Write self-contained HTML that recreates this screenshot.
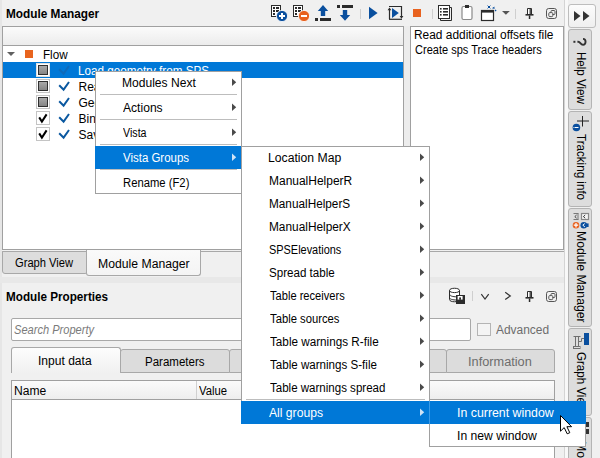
<!DOCTYPE html>
<html><head><meta charset="utf-8">
<style>
*{box-sizing:border-box;margin:0;padding:0}
html,body{width:600px;height:458px;overflow:hidden;background:#f0f0f0}
body{position:relative;font-family:"Liberation Sans",sans-serif;font-size:12px;color:#000}
.a{position:absolute}
.t{position:absolute;white-space:pre;line-height:12px;font-size:12px}
.b{font-weight:bold}
svg{position:absolute;overflow:visible}
</style></head><body>

<!-- left darker strip -->
<div class="a" style="left:0;top:0;width:2px;height:458px;background:#e6e6e6"></div>

<!-- top title -->
<div class="t b" style="left:5.50px;top:8.00px;transform-origin:0 0;transform:scaleX(0.9842)">Module Manager</div>

<!-- tree box -->
<div class="a" style="left:2px;top:26px;width:402px;height:224px;background:#fff;border:1px solid #a0a0a0"></div>
<div class="a" style="left:3px;top:27px;width:400px;height:19px;background:linear-gradient(#fbfbfb,#ececec);border-bottom:1px solid #a0a0a0"></div>

<!-- splitter between tree and text box -->
<div class="a" style="left:404px;top:26px;width:6px;height:224px;background:#ececec"></div>

<!-- text box -->
<div class="a" style="left:410px;top:26px;width:154px;height:224px;background:#fff;border:1px solid #a0a0a0"></div>
<div class="t" style="left:413.91px;top:29.00px;transform-origin:0 0;transform:scaleX(0.9921)">Read additional offsets file</div>
<div class="t" style="left:414.90px;top:44.00px;transform-origin:0 0;transform:scaleX(0.9181)">Create sps Trace headers</div>

<!-- vertical separator line -->
<div class="a" style="left:564px;top:0;width:1px;height:458px;background:#d4d4d4"></div>
<div class="a" style="left:565px;top:0;width:3px;height:458px;background:#f8f8f8"></div>

<!-- tree rows -->
<svg style="left:0;top:0" width="1" height="1"></svg>
<div class="a" style="left:7px;top:52px;width:0;height:0;border-left:4px solid transparent;border-right:4px solid transparent;border-top:4px solid #606060"></div>
<div class="a" style="left:25px;top:50px;width:8px;height:8px;background:#e8641e"></div>
<div class="t" style="left:42.73px;top:49.00px;transform-origin:0 0;transform:scaleX(0.9720)">Flow</div>

<div class="a" style="left:3px;top:62px;width:400px;height:16px;background:#0078d7"></div>
<div class="t" style="left:78px;top:65px;color:#fff;transform-origin:0 0;transform:scaleX(0.9724)">Load geometry from SPS</div>
<div class="a" style="left:36px;top:63px;width:14px;height:14px;border:1px solid #e0e0e0;background:#fff"></div><div class="a" style="left:38px;top:65px;width:10px;height:10px;border:1px solid #303030;background:linear-gradient(#a8a8a8,#858585)"></div><svg style="left:58px;top:65px" width="12" height="10"><path d="M1.2 4.2 L5.6 8.6 L11 1" fill="none" stroke="#1a5fa3" stroke-opacity="0.55" stroke-width="2"/></svg><div class="a" style="left:36px;top:79px;width:14px;height:14px;border:1px solid #c4c4c4;background:#fff"></div><div class="a" style="left:38px;top:81px;width:10px;height:10px;border:1px solid #303030;background:linear-gradient(#a8a8a8,#858585)"></div><svg style="left:58px;top:81px" width="12" height="10"><path d="M1.2 4.2 L5.6 8.6 L11 1" fill="none" stroke="#0a58a0" stroke-opacity="1" stroke-width="2"/></svg><div class="t" style="left:78.5px;top:81px">Read additional offsets file</div><div class="a" style="left:36px;top:95px;width:14px;height:14px;border:1px solid #c4c4c4;background:#fff"></div><div class="a" style="left:38px;top:97px;width:10px;height:10px;border:1px solid #303030;background:linear-gradient(#a8a8a8,#858585)"></div><svg style="left:58px;top:97px" width="12" height="10"><path d="M1.2 4.2 L5.6 8.6 L11 1" fill="none" stroke="#0a58a0" stroke-opacity="1" stroke-width="2"/></svg><div class="t" style="left:78.5px;top:97px">Geometry QC</div><div class="a" style="left:36px;top:111px;width:14px;height:14px;border:1px solid #c4c4c4;background:#fff"></div><svg style="left:36px;top:111px" width="14" height="14"><path d="M3.2 6.4 L5.9 10.6 L10.6 3.4" fill="none" stroke="#000" stroke-width="2"/></svg><svg style="left:58px;top:113px" width="12" height="10"><path d="M1.2 4.2 L5.6 8.6 L11 1" fill="none" stroke="#0a58a0" stroke-opacity="1" stroke-width="2"/></svg><div class="t" style="left:78.5px;top:113px">Binning</div><div class="a" style="left:36px;top:127px;width:14px;height:14px;border:1px solid #c4c4c4;background:#fff"></div><svg style="left:36px;top:127px" width="14" height="14"><path d="M3.2 6.4 L5.9 10.6 L10.6 3.4" fill="none" stroke="#000" stroke-width="2"/></svg><svg style="left:58px;top:129px" width="12" height="10"><path d="M1.2 4.2 L5.6 8.6 L11 1" fill="none" stroke="#0a58a0" stroke-opacity="1" stroke-width="2"/></svg><div class="t" style="left:78.5px;top:129px">Save geometry</div>

<svg style="left:0;top:0" width="600" height="458">
<!-- icon1 table + plus -->
<rect x="271.5" y="5.5" width="9" height="11" fill="#fff" stroke="#2b2b2b" stroke-width="1"/>
<rect x="273" y="7" width="2" height="2" fill="#2b2b2b"/><rect x="276" y="7" width="3" height="2" fill="#2b2b2b"/>
<rect x="273" y="10" width="2" height="2" fill="#2b2b2b"/><rect x="276" y="10" width="3" height="2" fill="#2b2b2b"/>
<rect x="273" y="13" width="2" height="2" fill="#2b2b2b"/>
<circle cx="282" cy="16" r="5.6" fill="#0a4f9e" stroke="#fff" stroke-width="0.8"/>
<rect x="279" y="15" width="6" height="2" fill="#fff"/><rect x="281" y="13" width="2" height="6" fill="#fff"/>
<!-- icon2 table + minus -->
<rect x="293.5" y="5.5" width="9" height="11" fill="#fff" stroke="#2b2b2b" stroke-width="1"/>
<rect x="295" y="7" width="2" height="2" fill="#2b2b2b"/><rect x="298" y="7" width="3" height="2" fill="#2b2b2b"/>
<rect x="295" y="10" width="2" height="2" fill="#2b2b2b"/><rect x="298" y="10" width="3" height="2" fill="#2b2b2b"/>
<rect x="295" y="13" width="2" height="2" fill="#2b2b2b"/>
<circle cx="304" cy="16" r="5.6" fill="#e8621f" stroke="#fff" stroke-width="0.8"/>
<rect x="301" y="15" width="6" height="2" fill="#fff"/>
<!-- upload -->
<path d="M323 5 L328.2 11 H325.2 V16 H320.8 V11 H317.8 Z" fill="#0a4f9e"/>
<rect x="315" y="18" width="3" height="3" fill="#2b2b2b"/><rect x="320" y="18" width="11" height="3" fill="#2b2b2b"/>
<!-- download -->
<rect x="337" y="5" width="3" height="3" fill="#2b2b2b"/><rect x="342" y="5" width="11" height="3" fill="#2b2b2b"/>
<path d="M345 20.8 L350.2 15 H347.2 V10 H342.8 V15 H339.8 Z" fill="#0a4f9e"/>
<!-- sep -->
<rect x="360" y="9" width="1" height="10" fill="#cfcfcf"/>
<!-- play -->
<path d="M369 6.8 L377.6 13 L369 19.2 Z" fill="#0a4f9e"/>
<!-- run step -->
<path d="M389.5 19 V9" stroke="#2b2b2b" stroke-width="1.2" fill="none"/>
<path d="M387.6 10.2 L389.5 7.5 L391.4 10.2 Z" fill="#2b2b2b"/>
<path d="M389 6.5 H401.5 V17" stroke="#2b2b2b" stroke-width="1.2" fill="none"/>
<path d="M399.6 16 L401.5 18.7 L403.4 16 Z" fill="#2b2b2b"/>
<path d="M389 19.3 H402" stroke="#2b2b2b" stroke-width="1.2" fill="none"/>
<path d="M392 8 L398.8 13 L392 18 Z" fill="#0a4f9e"/>
<!-- stop -->
<rect x="413" y="9" width="8" height="8" fill="#e8621f"/>
<!-- sep -->
<rect x="432" y="9" width="1" height="10" fill="#cfcfcf"/>
<!-- docs list -->
<path d="M440.5 18.5 V20.5 H451.5 V7.5 H449.5" fill="none" stroke="#2b2b2b" stroke-width="1"/>
<rect x="438.5" y="5.5" width="11" height="13" fill="#fff" stroke="#2b2b2b" stroke-width="1"/>
<rect x="440" y="8" width="1.6" height="1.6" fill="#2b2b2b"/><rect x="443" y="8" width="5" height="1.6" fill="#2b2b2b"/>
<rect x="440" y="11" width="1.6" height="1.6" fill="#2b2b2b"/><rect x="443" y="11" width="5" height="1.6" fill="#2b2b2b"/>
<rect x="440" y="14" width="1.6" height="1.6" fill="#2b2b2b"/><rect x="443" y="14" width="5" height="1.6" fill="#2b2b2b"/>
<!-- clipboard -->
<rect x="462" y="6.5" width="10" height="13" rx="1.5" fill="#fff" stroke="#8a8a8a" stroke-width="1.2"/>
<rect x="465" y="5" width="4" height="3" fill="#2b2b2b"/>
<!-- window sparkle -->
<rect x="481.5" y="10.5" width="12" height="10" fill="#fff" stroke="#2b2b2b" stroke-width="1.2"/>
<rect x="481" y="10" width="13" height="2.6" fill="#2b2b2b"/>
<path d="M487.6 5.6 L490.4 8.4 M490.4 5.6 L487.6 8.4" stroke="#0a4f9e" stroke-width="1"/>
<rect x="488.4" y="6.4" width="1.4" height="1.4" fill="#0a4f9e"/>
<path d="M492.6 8.6 L494.6 7.2 M493 7.2 L494.3 8.8" stroke="#0a4f9e" stroke-width="1"/>
<path d="M495 10 L496.2 11" stroke="#0a4f9e" stroke-width="1.2"/>
<!-- dropdown -->
<path d="M502 11 H509.8 L505.9 14.8 Z" fill="#555"/>
<!-- sep -->
<rect x="515" y="9" width="1" height="10" fill="#cfcfcf"/>
<g transform="translate(0,0)">
<path d="M527.5 8.5 H531.5 V14.5 H527.5 Z" fill="#fff" stroke="#2b2b2b" stroke-width="1"/>
<path d="M530.2 9 V14" stroke="#2b2b2b" stroke-width="1.2"/>
<rect x="525.5" y="14" width="8" height="1.6" fill="#2b2b2b"/>
<rect x="528.8" y="15.5" width="1.5" height="3.5" fill="#2b2b2b"/>
</g>
<g transform="translate(0,0)">
<rect x="546.5" y="8.5" width="10" height="10" rx="2.2" fill="none" stroke="#555" stroke-width="1"/>
<rect x="551" y="10.5" width="4" height="4" rx="1" fill="none" stroke="#555" stroke-width="1"/>
<rect x="548.8" y="12.6" width="4" height="4" rx="1" fill="#f0f0f0" stroke="#555" stroke-width="1"/>
</g>
<!-- lower toolbar -->
<path d="M449.5 290.5 C449.5 287.5 459.5 287.5 459.5 290.5 V299.5 C459.5 302.5 449.5 302.5 449.5 299.5 Z" fill="#fff" stroke="#2b2b2b" stroke-width="1"/>
<path d="M449.5 290.5 C449.5 293.3 459.5 293.3 459.5 290.5" fill="none" stroke="#2b2b2b" stroke-width="1"/>
<path d="M449.5 294 C449.5 296.8 456 296.8 456 296.8" fill="none" stroke="#2b2b2b" stroke-width="1"/>
<path d="M449.5 297.5 C449.5 300 456 300 456 300" fill="none" stroke="#2b2b2b" stroke-width="1"/>
<rect x="456" y="295" width="9" height="9" fill="#2b2b2b"/>
<rect x="457.6" y="296" width="5" height="3.6" fill="#fff"/><rect x="459.2" y="297.4" width="1.8" height="2.4" fill="#2b2b2b"/>
<rect x="472" y="291" width="1" height="10" fill="#cfcfcf"/>
<path d="M481.3 294.2 L485 299 L488.7 294.2" fill="none" stroke="#333" stroke-width="1.2"/>
<path d="M505.2 292.3 L510.3 296 L505.2 299.6" fill="none" stroke="#333" stroke-width="1.2"/>
<g transform="translate(0,283)">
<path d="M527.5 8.5 H531.5 V14.5 H527.5 Z" fill="#fff" stroke="#2b2b2b" stroke-width="1"/>
<path d="M530.2 9 V14" stroke="#2b2b2b" stroke-width="1.2"/>
<rect x="525.5" y="14" width="8" height="1.6" fill="#2b2b2b"/>
<rect x="528.8" y="15.5" width="1.5" height="3.5" fill="#2b2b2b"/>
</g>
<g transform="translate(0,283)">
<rect x="546.5" y="8.5" width="10" height="10" rx="2.2" fill="none" stroke="#555" stroke-width="1"/>
<rect x="551" y="10.5" width="4" height="4" rx="1" fill="none" stroke="#555" stroke-width="1"/>
<rect x="548.8" y="12.6" width="4" height="4" rx="1" fill="#f0f0f0" stroke="#555" stroke-width="1"/>
</g>
</svg>
<!-- right strip -->
<div class="a" style="left:568px;top:4px;width:28px;height:24px;border:1px solid #bdbdbd;border-radius:3px;background:linear-gradient(#fcfcfc,#efefef)"></div>
<svg style="left:0;top:0" width="600" height="458">
<path d="M574 11 L580.5 16 L574 21 Z" fill="#333"/>
<path d="M583 11 L589.5 16 L583 21 Z" fill="#333"/>
</svg>
<div class="a" style="left:568px;top:29px;width:24px;height:81px;border:1px solid #b4b4b4;border-radius:3px;background:#dddddd"></div>
<div class="a" style="left:568px;top:111px;width:24px;height:96px;border:1px solid #b4b4b4;border-radius:3px;background:#dddddd"></div>
<div class="a" style="left:568px;top:208px;width:24px;height:119px;border:1px solid #b4b4b4;border-radius:3px;background:#dddddd"></div>
<div class="a" style="left:568px;top:328px;width:24px;height:88px;border:1px solid #b4b4b4;border-radius:3px;background:#dddddd"></div>
<div class="a" style="left:568px;top:417px;width:24px;height:60px;border:1px solid #b4b4b4;border-radius:3px;background:#dddddd"></div>
<div class="t" style="left:586.5px;top:52px;transform-origin:0 0;transform:rotate(90deg) scaleX(0.964)">Help View</div>
<div class="t" style="left:586.5px;top:134px;transform-origin:0 0;transform:rotate(90deg) scaleX(0.968)">Tracking info</div>
<div class="t" style="left:586.5px;top:231px;transform-origin:0 0;transform:rotate(90deg) scaleX(1.017)">Module Manager</div>
<div class="t" style="left:586.5px;top:352px;transform-origin:0 0;transform:rotate(90deg) scaleX(0.964)">Graph View</div>
<div class="t" style="left:586.5px;top:441px;transform-origin:0 0;transform:rotate(90deg) scaleX(1.017)">Module Manager</div>
<svg style="left:0;top:0" width="600" height="458">
<!-- ? rotated -->
<g transform="translate(581,41.8) rotate(90)">
<path d="M-2.9 -2 C-2.9 -5.4 3 -5.4 3 -2 C3 0.6 0 0.6 0 2.8 V3.6" fill="none" stroke="#333" stroke-width="1.9"/>
<rect x="-1" y="5.6" width="2" height="2" fill="#333"/>
</g>
<!-- crosshair + info -->
<path d="M577 121 H589 M582.5 116 V126.5" stroke="#222" stroke-width="1"/>
<circle cx="576.4" cy="127.5" r="3.8" fill="#0a4f9e"/>
<path d="M575 127.5 H578.5" stroke="#fff" stroke-width="1"/>
<rect x="573.5" y="127" width="1" height="1" fill="#fff"/>
<!-- module manager icon -->
<path d="M573.5 213.5 H578.5 M573.5 219.5 H578.5 M578 213.5 V219.5" fill="none" stroke="#777" stroke-width="1"/>
<path d="M576.6 215 L574.8 216.6 L576.6 218.2" fill="none" stroke="#444" stroke-width="1"/>
<rect x="581.5" y="213.5" width="7" height="6" fill="#f4f4f4" stroke="#888" stroke-width="1.2"/>
<path d="M585.2 215 L583.4 216.6 L585.2 218.2" fill="none" stroke="#333" stroke-width="1"/>
<circle cx="576" cy="225.2" r="3.3" fill="#e8621f"/>
<path d="M573.8 225.2 H578.2 M576 223 V227.4" stroke="#fff" stroke-width="1.2"/>
<circle cx="583.8" cy="225.2" r="3.3" fill="#0a4f9e"/>
<rect x="586.2" y="223.4" width="2.4" height="3.6" fill="#0a4f9e"/>
<path d="M584.8 223.6 L582.8 225.2 L584.8 226.8" fill="none" stroke="#fff" stroke-width="1"/>
<!-- graph view icon -->
<rect x="584" y="333" width="5" height="12" fill="#0a4f9e"/>
<path d="M573.5 336.5 H580.5 M575.5 336.5 V346.5 M578.5 336.5 V346.5 M579 341.5 H581.5 V338.5 H584" fill="none" stroke="#6f6f6f" stroke-width="1"/><rect x="573.5" y="346.5" width="6.5" height="2" fill="none" stroke="#6f6f6f" stroke-width="1"/>
<!-- bottom tab icon -->
<rect x="586" y="422" width="3" height="5" fill="#333"/>
<rect x="586" y="429" width="3" height="5" fill="#333"/>
</svg>

<!-- bottom tabs -->
<div class="a" style="left:2px;top:251px;width:562px;height:1px;background:#a8a8a8"></div>
<div class="a" style="left:2px;top:251px;width:86px;height:23px;background:#dddddd;border:1px solid #a8a8a8;border-radius:0 0 3px 3px"></div>
<div class="t" style="left:14.70px;top:257.00px;transform-origin:0 0;transform:scaleX(0.9302)">Graph View</div>
<div class="a" style="left:86px;top:250px;width:115px;height:26px;background:linear-gradient(#fafafa,#f4f4f4);border:1px solid #a8a8a8;border-top:none;border-radius:0 0 3px 3px"></div>
<div class="t" style="left:98.2px;top:258.00px;transform-origin:0 0;transform:scaleX(1.0180)">Module Manager</div>

<!-- band -->
<div class="a" style="left:0;top:277px;width:564px;height:6px;background:#e8e8e8"></div>

<div class="t b" style="left:5.60px;top:291.00px;transform-origin:0 0;transform:scaleX(0.9752)">Module Properties</div>

<!-- search -->
<div class="a" style="left:11px;top:318px;width:460px;height:23px;background:#fff;border:1px solid #a8a8a8;border-radius:2px"></div>
<div class="t" style="left:14.40px;top:324.00px;font-style:italic;color:#7a7a7a;transform-origin:0 0;transform:scaleX(0.9227)">Search Property</div>
<div class="a" style="left:477px;top:323px;width:14px;height:13px;background:#f4f4f4;border:1px solid #b4b4b4"></div>
<div class="t" style="left:496.00px;top:324.00px;color:#6d6d6d;transform-origin:0 0;transform:scaleX(0.9943)">Advanced</div>

<!-- property tabs -->
<div class="a" style="left:11px;top:347px;width:110px;height:26px;background:linear-gradient(#fdfdfd,#f0f0f0);border:1px solid #a8a8a8;border-bottom:none;border-radius:3px 3px 0 0"></div>
<div class="t" style="left:37.50px;top:355.00px;transform-origin:0 0;transform:scaleX(1.0038)">Input data</div>
<div class="a" style="left:120px;top:349px;width:110px;height:24px;background:#dcdcdc;border:1px solid #a8a8a8;border-radius:3px 3px 0 0"></div>
<div class="t" style="left:145.2px;top:356.00px;transform-origin:0 0;transform:scaleX(0.9590)">Parameters</div>
<div class="a" style="left:229px;top:349px;width:218px;height:24px;background:#dcdcdc;border:1px solid #a8a8a8;border-radius:3px 3px 0 0"></div>
<div class="a" style="left:446px;top:349px;width:109px;height:24px;background:#dcdcdc;border:1px solid #a8a8a8;border-radius:3px 3px 0 0"></div>
<div class="t" style="left:467.94px;top:356.00px;color:#6d6d6d;transform-origin:0 0;transform:scaleX(1.0627)">Information</div>

<!-- table -->
<div class="a" style="left:11px;top:380px;width:544px;height:90px;background:#fff;border:1px solid #a0a0a0"></div>
<div class="a" style="left:12px;top:381px;width:542px;height:19px;background:linear-gradient(#fbfbfb,#eeeeee);border-bottom:1px solid #a0a0a0"></div>
<div class="a" style="left:196px;top:381px;width:1px;height:18px;background:#d0d0d0"></div>
<div class="t" style="left:13.59px;top:385.00px;transform-origin:0 0;transform:scaleX(1.0065)">Name</div>
<div class="t" style="left:199.00px;top:385.00px;transform-origin:0 0;transform:scaleX(0.9400)">Value</div>

<!-- MENU 1 -->
<div class="a" style="left:95px;top:71px;width:147px;height:123px;background:#fff;border:1px solid #a0a0a0"></div>
<div class="t" style="left:122.29px;top:77.00px;transform-origin:0 0;transform:scaleX(1.0055)">Modules Next</div>
<div class="a" style="left:100px;top:94px;width:137px;height:1px;background:#bdbdbd"></div>
<div class="t" style="left:123.30px;top:102.00px;transform-origin:0 0;transform:scaleX(1.0077)">Actions</div>
<div class="a" style="left:100px;top:119px;width:137px;height:1px;background:#bdbdbd"></div>
<div class="t" style="left:123.30px;top:127.00px;transform-origin:0 0;transform:scaleX(0.8889)">Vista</div>
<div class="a" style="left:100px;top:144px;width:137px;height:1px;background:#bdbdbd"></div>
<div class="a" style="left:95px;top:146px;width:146px;height:23px;background:#0078d7"></div>
<div class="t" style="left:123.30px;top:152.00px;color:#fff;transform-origin:0 0;transform:scaleX(0.9551)">Vista Groups</div>
<div class="a" style="left:100px;top:169px;width:137px;height:1px;background:#bdbdbd"></div>
<div class="t" style="left:123.2px;top:177.00px;transform-origin:0 0;transform:scaleX(0.9391)">Rename (F2)</div>

<!-- MENU 2 -->
<div class="a" style="left:241px;top:146px;width:189px;height:278px;background:#fff;border:1px solid #a0a0a0;border-bottom:none"></div>
<div class="t" style="left:268.48px;top:152.00px;transform-origin:0 0;transform:scaleX(1.0169)">Location Map</div>
<div class="t" style="left:268.50px;top:175.00px;transform-origin:0 0;transform:scaleX(0.9976)">ManualHelperR</div>
<div class="t" style="left:268.52px;top:198.00px;transform-origin:0 0;transform:scaleX(0.9817)">ManualHelperS</div>
<div class="t" style="left:268.51px;top:221.00px;transform-origin:0 0;transform:scaleX(0.9878)">ManualHelperX</div>
<div class="t" style="left:268.59px;top:244.00px;transform-origin:0 0;transform:scaleX(0.9103)">SPSElevations</div>
<div class="t" style="left:268.53px;top:267.00px;transform-origin:0 0;transform:scaleX(0.9657)">Spread table</div>
<div class="t" style="left:269.50px;top:290.00px;transform-origin:0 0;transform:scaleX(0.9259)">Table receivers</div>
<div class="t" style="left:269.50px;top:313.00px;transform-origin:0 0;transform:scaleX(0.9378)">Table sources</div>
<div class="t" style="left:269.50px;top:336.00px;transform-origin:0 0;transform:scaleX(0.9757)">Table warnings R-file</div>
<div class="t" style="left:269.50px;top:359.00px;transform-origin:0 0;transform:scaleX(0.9658)">Table warnings S-file</div>
<div class="t" style="left:269.50px;top:382.00px;transform-origin:0 0;transform:scaleX(0.9608)">Table warnings spread</div>
<div class="a" style="left:246px;top:399px;width:179px;height:1px;background:#bdbdbd"></div>
<div class="a" style="left:241px;top:401px;width:345px;height:23px;background:#0078d7"></div>
<div class="a" style="left:429px;top:401px;width:1px;height:23px;background:#3b9be8"></div>
<div class="t" style="left:269.30px;top:407.00px;color:#fff;transform-origin:0 0;transform:scaleX(1.0113)">All groups</div>

<!-- MENU 3 -->
<div class="a" style="left:429px;top:424px;width:157px;height:23px;background:#fff;border:1px solid #a0a0a0;border-top:none"></div>
<div class="t" style="left:457.1px;top:407.00px;color:#fff;transform-origin:0 0;transform:scaleX(1.0290)">In current window</div>
<div class="t" style="left:457.1px;top:430.00px;transform-origin:0 0;transform:scaleX(1.0154)">In new window</div>

<svg style="left:0;top:0" width="600" height="458">
<path d="M232 78.5 L236.2 82.3 L232 86.1 Z" fill="#4a4a4a"/>
<path d="M232 103.5 L236.2 107.3 L232 111.1 Z" fill="#4a4a4a"/>
<path d="M232 128.5 L236.2 132.3 L232 136.10000000000002 Z" fill="#4a4a4a"/>
<path d="M232 153.5 L236.2 157.3 L232 161.10000000000002 Z" fill="#cfe3f6"/>
<path d="M420 153.5 L424.2 157.3 L420 161.10000000000002 Z" fill="#4a4a4a"/>
<path d="M420 176.5 L424.2 180.3 L420 184.10000000000002 Z" fill="#4a4a4a"/>
<path d="M420 199.5 L424.2 203.3 L420 207.10000000000002 Z" fill="#4a4a4a"/>
<path d="M420 222.5 L424.2 226.3 L420 230.10000000000002 Z" fill="#4a4a4a"/>
<path d="M420 245.5 L424.2 249.3 L420 253.10000000000002 Z" fill="#4a4a4a"/>
<path d="M420 268.5 L424.2 272.3 L420 276.1 Z" fill="#4a4a4a"/>
<path d="M420 291.5 L424.2 295.3 L420 299.1 Z" fill="#4a4a4a"/>
<path d="M420 314.5 L424.2 318.3 L420 322.1 Z" fill="#4a4a4a"/>
<path d="M420 337.5 L424.2 341.3 L420 345.1 Z" fill="#4a4a4a"/>
<path d="M420 360.5 L424.2 364.3 L420 368.1 Z" fill="#4a4a4a"/>
<path d="M420 383.5 L424.2 387.3 L420 391.1 Z" fill="#4a4a4a"/>
<path d="M420 408.5 L424.2 412.3 L420 416.1 Z" fill="#cfe3f6"/>
<path d="M560.5 415.5 V431.2 L564.2 427.6 L567.2 433.8 L569.8 432.7 L566.9 426.7 L571.6 426.7 Z" fill="#fff" stroke="#000" stroke-width="1" stroke-linejoin="miter"/>
</svg>
</body></html>
